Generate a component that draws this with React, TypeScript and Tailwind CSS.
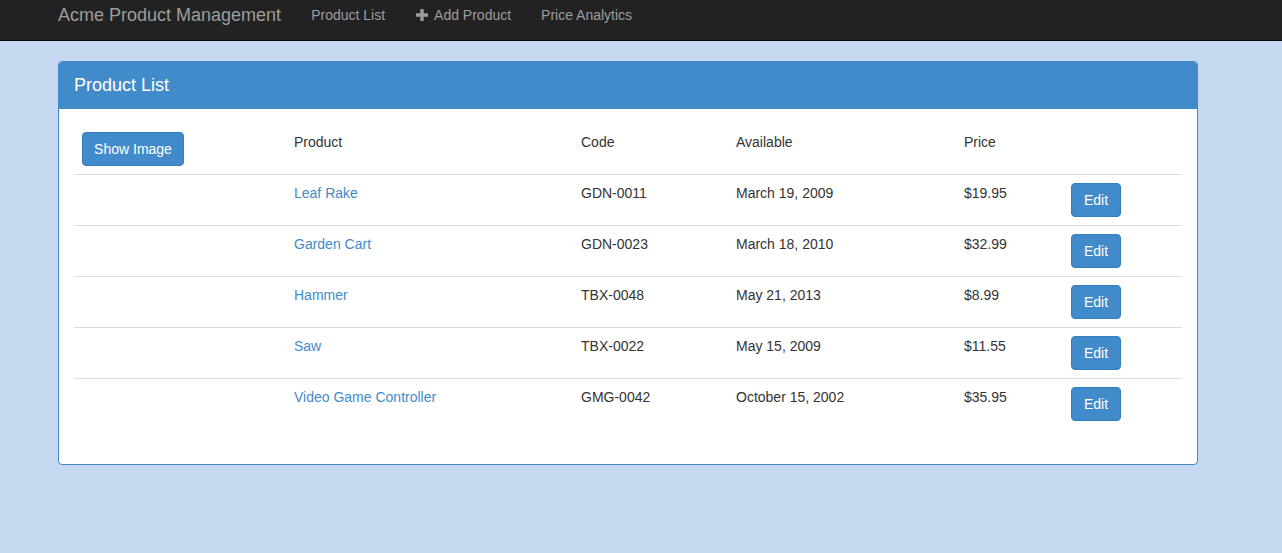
const products = [
  { name: "Leaf Rake", code: "GDN-0011", available: "March 19, 2009", price: "$19.95" },
  { name: "Garden Cart", code: "GDN-0023", available: "March 18, 2010", price: "$32.99" },
  { name: "Hammer", code: "TBX-0048", available: "May 21, 2013", price: "$8.99" },
  { name: "Saw", code: "TBX-0022", available: "May 15, 2009", price: "$11.55" },
  { name: "Video Game Controller", code: "GMG-0042", available: "October 15, 2002", price: "$35.95" },
];

function PlusIcon() {
  return (
    <svg width="12" height="12" viewBox="0 0 12 12" className="shrink-0 ml-[1px] mr-[6px]">
      <path d="M4.3 0h3.4v4.3H12v3.4H7.7V12H4.3V7.7H0V4.3h4.3z" fill="#9d9d9d" />
    </svg>
  );
}

export default function App() {
  return (
    <div
      className="min-h-[553px] bg-[#c7d9f0] text-[14px] text-[#333]"
      style={{ fontFamily: '"Liberation Sans", Arial, sans-serif' }}
    >
      <nav className="h-[41px] bg-[#222] border-b border-[#080808]">
        <div className="ml-[58px] flex items-center h-[30px] text-[#9d9d9d] whitespace-nowrap">
          <span className="text-[18px] mr-[30px]">Acme Product Management</span>
          <span className="mr-[30px]">Product List</span>
          <span className="flex items-center w-[96px] shrink-0 mr-[30px]">
            <PlusIcon />
            Add Product
          </span>
          <span>Price Analytics</span>
        </div>
      </nav>

      <div className="ml-[58px] mt-[20px] w-[1140px] bg-white border border-[#428bca] rounded-[4px]">
        <div className="bg-[#428bca] h-[47px] px-[15px] flex items-center text-white text-[18px] rounded-t-[3px]">
          Product List
        </div>
        <div className="p-[15px]">
          <table className="w-[1108px] table-fixed border-collapse mb-[20px]">
            <colgroup>
              <col className="w-[212px]" />
              <col className="w-[287px]" />
              <col className="w-[155px]" />
              <col className="w-[228px]" />
              <col className="w-[107px]" />
              <col className="w-[119px]" />
            </colgroup>
            <thead>
              <tr className="border-b border-[#ddd]">
                <th className="p-[8px] text-left font-normal align-top leading-[20px]">
                  <button className="h-[34px] w-[102px] bg-[#428bca] border border-[#357ebd] rounded-[4px] text-white text-[14px] leading-[20px]">
                    Show Image
                  </button>
                </th>
                <th className="p-[8px] text-left font-normal align-top leading-[20px]">Product</th>
                <th className="p-[8px] text-left font-normal align-top leading-[20px]">Code</th>
                <th className="p-[8px] text-left font-normal align-top leading-[20px]">Available</th>
                <th className="p-[8px] text-left font-normal align-top leading-[20px]">Price</th>
                <th className="p-[8px]"></th>
              </tr>
            </thead>
            <tbody>
              {products.map((p, i) => (
                <tr key={p.code} className={i < products.length - 1 ? "border-b border-[#ddd]" : ""}>
                  <td className="p-[8px] align-top leading-[20px]"></td>
                  <td className="p-[8px] align-top leading-[20px] text-[#428bca]">{p.name}</td>
                  <td className="p-[8px] align-top leading-[20px]">{p.code}</td>
                  <td className="p-[8px] align-top leading-[20px]">{p.available}</td>
                  <td className="p-[8px] align-top leading-[20px]">{p.price}</td>
                  <td className="p-[8px] align-top leading-[20px]">
                    <button className="h-[34px] w-[50px] bg-[#428bca] border border-[#357ebd] rounded-[4px] text-white text-[14px] leading-[20px]">
                      Edit
                    </button>
                  </td>
                </tr>
              ))}
            </tbody>
          </table>
        </div>
      </div>
    </div>
  );
}
